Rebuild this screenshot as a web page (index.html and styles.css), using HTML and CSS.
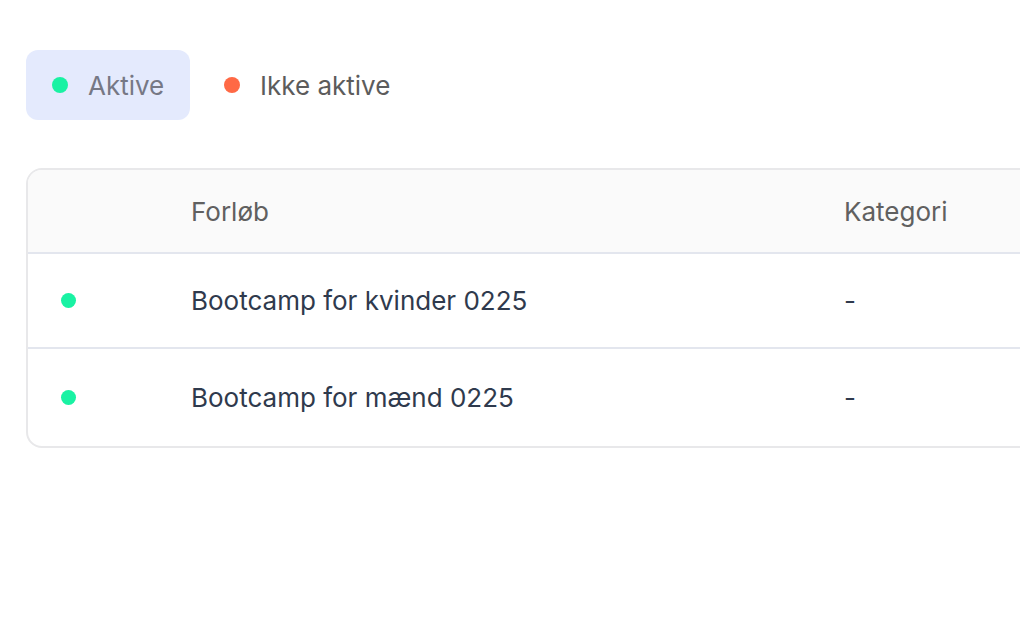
FILE: index.html
```html
<!DOCTYPE html>
<html>
<head>
<meta charset="utf-8">
<link rel="stylesheet" href="styles.css">
</head>
<body>
<div class="page">
  <div class="tabs">
    <div class="tab active"><span class="dot green"></span><span>Aktive</span></div>
    <div class="tab"><span class="dot orange"></span><span>Ikke aktive</span></div>
  </div>
  <div class="table">
    <div class="row head">
      <div class="c1"></div>
      <div class="c2">Forløb</div>
      <div class="c3">Kategori</div>
    </div>
    <div class="row">
      <div class="c1"><span class="dot green small"></span></div>
      <div class="c2">Bootcamp for kvinder 0225</div>
      <div class="c3">-</div>
    </div>
    <div class="row last">
      <div class="c1"><span class="dot green small"></span></div>
      <div class="c2">Bootcamp for mænd 0225</div>
      <div class="c3">-</div>
    </div>
  </div>
</div>
</body>
</html>
```
FILE: styles.css
```css
html, body { margin: 0; padding: 0; background: #fff; overflow: hidden; }
body { font-family: Inter, "Noto Sans", sans-serif; width: 1020px; height: 642px; }
.page { padding: 50px 0 0 26px; }
.tabs { display: flex; }
.tab { display: flex; align-items: center; box-sizing: border-box; height: 70px; padding: 0 26px; border-radius: 12px; font-size: 26px; color: #5c5c5c; gap: 20px; }
.tab.active { background: #e4eafd; color: #767885; width: 164px; }
.tab + .tab { padding-left: 34px; }
.dot { display: inline-block; width: 16px; height: 16px; border-radius: 50%; flex: none; }
.dot.green { background: #19f2a3; }
.dot.orange { background: #ff6945; }
.dot.small { width: 15px; height: 15px; }
.table { margin-top: 48px; width: 1200px; border: 2px solid #e8e8ea; border-radius: 16px; overflow: hidden; }
.row { display: flex; align-items: center; height: 93px; border-bottom: 2px solid #e3e6ee; font-size: 26px; color: #2f3a4d; }
.row.last { border-bottom: none; height: 97px; }
.row.head { height: 82px; background: #fafafa; color: #606060; }
.c1 { width: 163px; padding-left: 33px; box-sizing: border-box; display: flex; align-items: center; }
.c2 { width: 653px; }
.c3 { flex: 1; }
```
